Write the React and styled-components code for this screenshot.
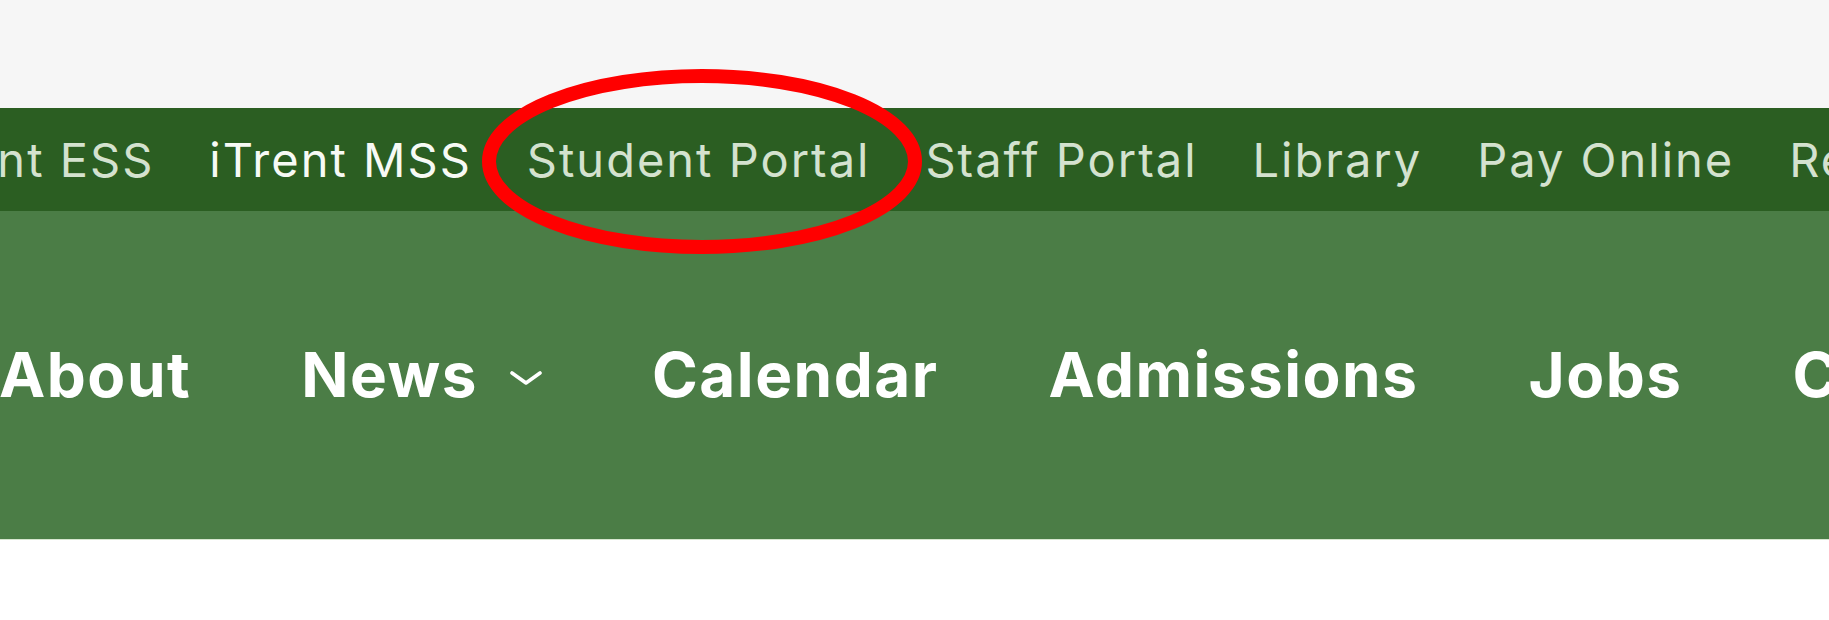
import React from 'react'
import styled, { createGlobalStyle } from 'styled-components';

const GlobalStyle = createGlobalStyle`
    html, body {
        margin: 0;
        padding: 0;
        background: #ffffff;
    }
    * {
        box-sizing: border-box;
    }
`;

const utilityLinks = [
    { label: 'iTrent ESS' },
    { label: 'iTrent MSS', active: true },
    { label: 'Student Portal' },
    { label: 'Staff Portal' },
    { label: 'Library' },
    { label: 'Pay Online' },
    { label: 'Recruitment' },
];

const mainLinks = [
    { label: 'About' },
    { label: 'News', dropdown: true },
    { label: 'Calendar' },
    { label: 'Admissions' },
    { label: 'Jobs' },
    { label: 'Contact' },
];

const Chevron = () => (
    <ChevronIcon viewBox="0 0 32 14" aria-hidden="true">
        <path d="M2 2 L16 12 L30 2" fill="none" stroke="#ffffff" strokeWidth="3.6" strokeLinecap="round" strokeLinejoin="round" />
    </ChevronIcon>
);

const App = () => {
  return (
    <Page>
        <GlobalStyle />
        <TopStrip />
        <UtilityBar>
            <UtilityList>
                {utilityLinks.map((item) => (
                    <UtilityLink key={item.label} $active={item.active}>{item.label}</UtilityLink>
                ))}
            </UtilityList>
        </UtilityBar>
        <MainNav>
            <MainList>
                {mainLinks.map((item) => (
                    <MainItem key={item.label}>
                        {item.label}
                        {item.dropdown ? <Chevron /> : null}
                    </MainItem>
                ))}
            </MainList>
        </MainNav>
        <Annotation viewBox="0 0 440 185" aria-hidden="true">
            <ellipse cx="220" cy="92.5" rx="213" ry="85.5" fill="none" stroke="#ff0000" strokeWidth="14" />
        </Annotation>
    </Page>
  )
}

const Page = styled.div`
    position: relative;
    width: 100%;
    min-height: 620px;
    background: #ffffff;
    overflow: hidden;
`;

const TopStrip = styled.div`
    height: 108px;
    background: #f6f6f6;
`;

const UtilityBar = styled.nav`
    height: 103px;
    background: #2b5e22;
    display: flex;
    align-items: center;
    overflow: hidden;
`;

const UtilityList = styled.ul`
    list-style: none;
    margin: 0 0 0 -94px;
    padding: 0;
    display: flex;
    align-items: center;
    gap: 55px;
    white-space: nowrap;
`;

const UtilityLink = styled.li`
    font-family: Inter, "Open Sans", sans-serif;
    font-size: 47px;
    font-weight: 400;
    letter-spacing: 2px;
    color: ${(p) => (p.$active ? '#f7faf5' : '#d4e2cf')};
    line-height: 1;
`;

const MainNav = styled.nav`
    height: 329px;
    background: #4b7d46;
    border-bottom: 1px solid #d6e6cf;
    display: flex;
    align-items: center;
    overflow: hidden;
`;

const MainList = styled.ul`
    list-style: none;
    margin: 0 0 0 -1px;
    padding: 0;
    display: flex;
    align-items: center;
    gap: 110px;
    white-space: nowrap;
`;

const MainItem = styled.li`
    display: flex;
    align-items: center;
    gap: 32px;
    font-family: Inter, "Open Sans", sans-serif;
    font-size: 62px;
    font-weight: 700;
    letter-spacing: 1.5px;
    color: #ffffff;
    line-height: 1;
`;

const ChevronIcon = styled.svg`
    width: 32px;
    height: 14px;
    margin-top: 6px;
`;

const Annotation = styled.svg`
    position: absolute;
    left: 482px;
    top: 69px;
    width: 440px;
    height: 185px;
    pointer-events: none;
`;

export default App;
